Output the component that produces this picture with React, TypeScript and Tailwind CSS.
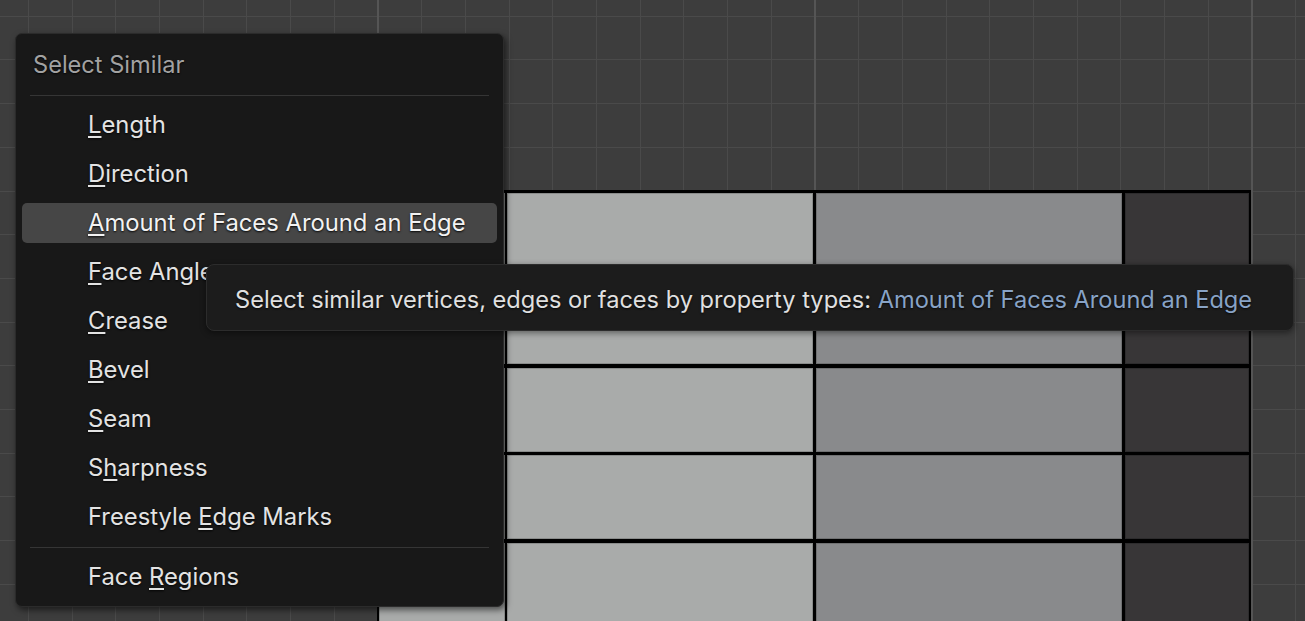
import React from "react";

const FONT = { fontFamily: "Inter, 'Noto Sans', 'DejaVu Sans', sans-serif" };

function Viewport() {
  const vx: number[] = [];
  for (let k = -8; k <= 21; k++) vx.push(377.5 + 43.7 * k);
  const hy: number[] = [];
  for (let k = 0; k <= 14; k++) hy.push(15.7 + 43.7 * k);
  const major = (k: number) => k % 10 === 0;
  return (
    <svg width="1305" height="621" viewBox="0 0 1305 621" className="block">
      <rect x="0" y="0" width="1305" height="621" fill="#3d3d3d" />
      {hy.map((y, i) => (
        <rect key={"h" + i} x="0" y={Math.round(y)} width="1305" height="1" fill="#4a4a4a" />
      ))}
      {vx.map((x, i) => {
        const k = i - 8;
        const m = major(k);
        return (
          <rect
            key={"v" + i}
            x={Math.round(x) - (m ? 1 : 0)}
            y="0"
            width={m ? 2 : 1}
            height="621"
            fill={m ? "#555555" : "#4a4a4a"}
          />
        );
      })}
      {/* mesh */}
      <g>
        <rect x="377" y="190" width="874" height="440" fill="#000" />
        {[
          [379, 505, "#a9abaa"],
          [507, 813, "#a9abaa"],
          [816, 1122, "#898a8c"],
          [1125, 1249, "#383637"],
        ].map(([x0, x1, c], ci) =>
          [
            [193, 364],
            [368, 452],
            [455, 539],
            [543, 630],
          ].map(([y0, y1], ri) => (
            <g key={ci + "-" + ri}>
              <rect
                x={x0 as number}
                y={y0}
                width={(x1 as number) - (x0 as number)}
                height={y1 - y0}
                fill={c as string}
              />
              <rect
                x={(x0 as number) + 0.5}
                y={y0 + 0.5}
                width={(x1 as number) - (x0 as number) - 1}
                height={y1 - y0 - 1}
                fill="none"
                stroke="rgba(0,0,0,0.18)"
                strokeWidth="1"
              />
            </g>
          ))
        )}
      </g>
    </svg>
  );
}

function Item({ pre, u, post, active }: { pre: string; u: string; post: string; active?: boolean }) {
  return (
    <div className="h-[49px] flex items-center">
      <div
        className={
          "h-[40px] mx-[6px] w-full rounded-[5px] flex items-center pl-[66px] " +
          (active ? "bg-[#464646] text-[#f2f2f2]" : "text-[#e3e3e3]")
        }
      >
        <span className="text-[23.8px] leading-none whitespace-nowrap [text-shadow:0_1px_2px_rgba(0,0,0,0.9)]">
          {pre}
          <span className="underline decoration-[2px] underline-offset-[3px]">{u}</span>
          {post}
        </span>
      </div>
    </div>
  );
}

export default function App() {
  return (
    <div className="relative w-[1305px] h-[621px] overflow-hidden bg-[#3d3d3d]" style={FONT}>
      <Viewport />

      {/* Menu */}
      <div className="absolute left-[15px] top-[33px] w-[489px] h-[574px] rounded-[7px] bg-[#181818] border border-[#2b2b2b] shadow-[2px_3px_6px_rgba(0,0,0,0.55)] flex flex-col">
        <div className="h-[61px] flex items-center pl-[17px]">
          <span className="text-[23.6px] leading-none text-[#a2a2a2] whitespace-nowrap [text-shadow:0_1px_2px_rgba(0,0,0,0.9)]">
            Select Similar
          </span>
        </div>
        <div className="h-[1px] bg-[#353535] mx-[14px]" />
        <div className="h-[4px]" />
        <Item pre="" u="L" post="ength" />
        <Item pre="" u="D" post="irection" />
        <Item pre="" u="A" post="mount of Faces Around an Edge" active />
        <Item pre="" u="F" post="ace Angles" />
        <Item pre="" u="C" post="rease" />
        <Item pre="" u="B" post="evel" />
        <Item pre="" u="S" post="eam" />
        <Item pre="S" u="h" post="arpness" />
        <Item pre="Freestyle " u="E" post="dge Marks" />
        <div className="h-[6px]" />
        <div className="h-[1px] bg-[#353535] mx-[14px]" />
        <div className="h-[4px]" />
        <Item pre="Face " u="R" post="egions" />
      </div>

      {/* Tooltip */}
      <div className="absolute left-[206px] top-[264px] w-[1088px] h-[67px] rounded-[8px] bg-[#1c1c1c] border border-[#2c2c2c] shadow-[0_2px_6px_rgba(0,0,0,0.45)] flex items-center pl-[28px] pt-[4px]">
        <span className="text-[23.6px] leading-none whitespace-nowrap text-[#e0e0e0] [text-shadow:0_1px_2px_rgba(0,0,0,0.8)]">
          Select similar vertices, edges or faces by property types:{" "}
          <span className="text-[#88a3c6]">Amount of Faces Around an Edge</span>
        </span>
      </div>
    </div>
  );
}
